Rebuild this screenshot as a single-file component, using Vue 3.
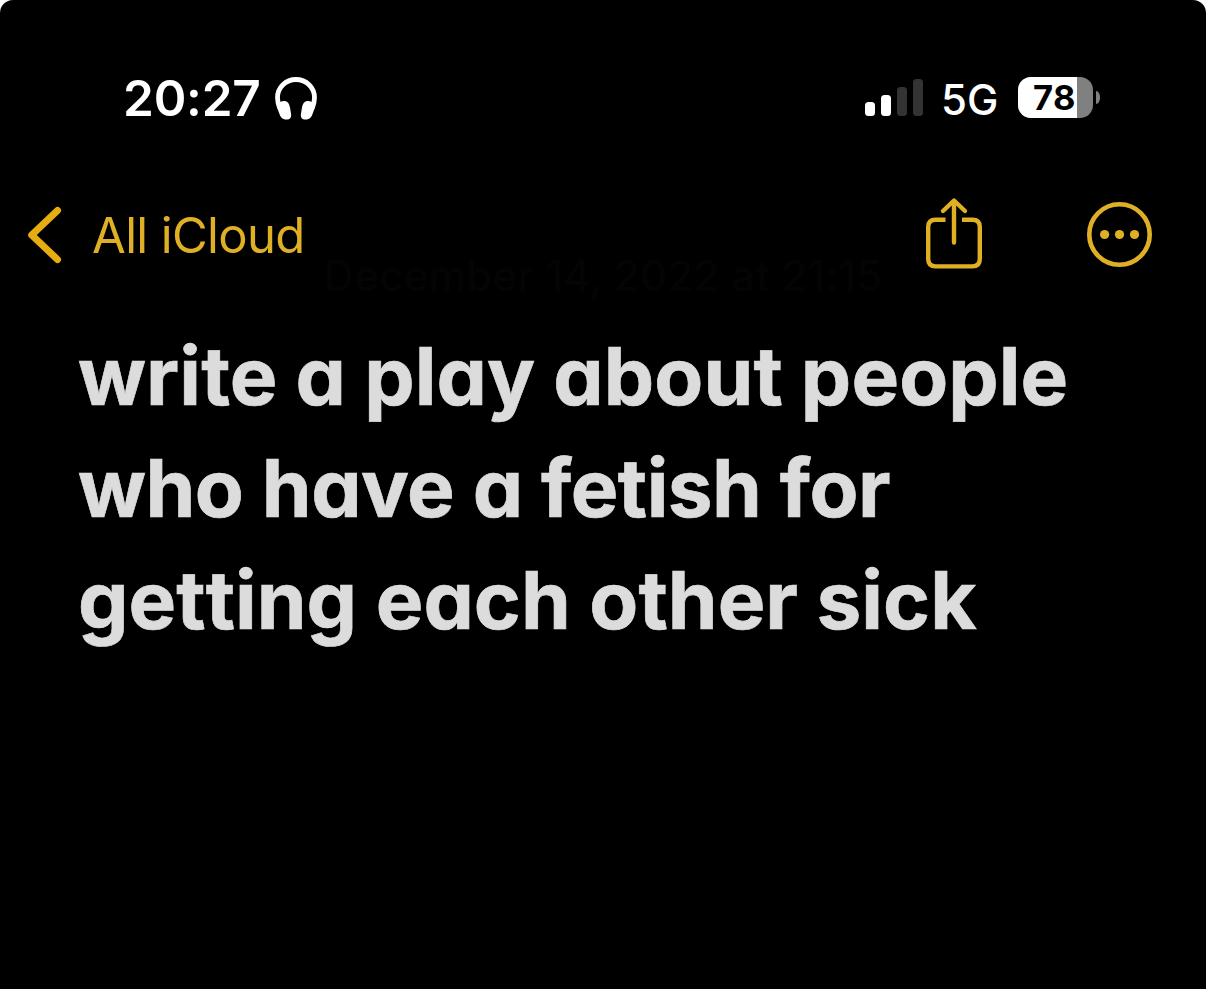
<template>
  <main class="screen">
    <header class="statusBar">
      <span class="time">{{ time }}</span>
      <svg class="headphones" width="42" height="44" viewBox="0 0 42 44">
        <path d="M5 31C3.200 27.500 2.500 24.500 2.500 20.800C2.500 10.500 10.800 2.500 21 2.500S39.500 10.500 39.500 20.800C39.500 24.500 38.800 27.500 37 31" fill="none" stroke="#fff" stroke-width="4.800" />
        <path d="M3 27C4.500 25 6.500 24 9 24C12.500 24 14.300 26.500 15.100 31L16 36.500C16.700 40.500 15 42.500 11.500 42.500C8 42.500 5.800 41 4.500 37L1.500 29Z" fill="#fff" />
        <path d="M39 27C37.500 25 35.500 24 33 24C29.500 24 27.700 26.500 26.900 31L26 36.500C25.300 40.500 27 42.500 30.500 42.500C34 42.500 36.200 41 37.500 37L40.500 29Z" fill="#fff" />
      </svg>
      <div class="signal">
        <i v-for="(h, i) in bars" :key="i" :class="['bar', i < strength ? 'on' : '']" :style="{ height: h + 'px' }"></i>
      </div>
      <span class="network">5G</span>
      <div class="battery">
        <div class="level" :style="{ width: battery + '%' }"></div>
        <span class="percent">{{ battery }}</span>
      </div>
      <i class="nub"></i>
    </header>

    <nav class="navBar">
      <button class="back">
        <svg width="35" height="58" viewBox="0 0 35 58">
          <path d="M30.500 4.500L4.700 29L30.500 53.500" fill="none" stroke="#e6ad10" stroke-width="7" stroke-linecap="round" stroke-linejoin="round" />
        </svg>
        <span class="backText">All iCloud</span>
      </button>
      <button class="share">
        <svg width="58" height="72" viewBox="0 0 58 72" fill="none" stroke="#e0b024" stroke-width="4.400">
          <path d="M20.500 22.800H10.500Q3.200 22.800 3.200 30.100V62.100Q3.200 69.400 10.500 69.400H47.500Q54.800 69.400 54.800 62.100V30.100Q54.800 22.800 47.500 22.800H37" />
          <path d="M29 45.500V4.500M18 14L29 3.500L40 14" stroke-linecap="round" stroke-linejoin="round" />
        </svg>
      </button>
      <button class="more">
        <svg width="66" height="66" viewBox="0 0 66 66" fill="#e0b024">
          <circle cx="33.500" cy="33.500" r="30.200" fill="none" stroke="#e0b024" stroke-width="4.600" />
          <circle cx="18.600" cy="33.500" r="4.600" />
          <circle cx="33.500" cy="33.500" r="4.600" />
          <circle cx="48.500" cy="33.500" r="4.600" />
        </svg>
      </button>
    </nav>

    <p class="date">December 14, 2022 at 21:15</p>
    <h1 class="note">
      <span v-for="line in lines" :key="line" class="line">{{ line }}</span>
    </h1>
  </main>
</template>

<script setup>
import { ref } from "vue";

const time = ref("20:27");
const battery = ref(78);
// signal bars: heights and how many are lit
const bars = [14, 21, 29, 37];
const strength = ref(2);

const lines = [
  "write a play about people",
  "who have a fetish for",
  "getting each other sick",
];
</script>

<style>
body {
  background: #fff;
}
</style>

<style scoped>
.screen {
  width: 1206px;
  height: 989px;
  box-sizing: border-box;
  overflow: hidden;
  padding-top: 77px;
  border-radius: 13px 13px 0 0;
  background: #000;
  color: #fff;
  font-family: Inter, "Liberation Sans", sans-serif;
}
/* status bar */
.statusBar {
  display: flex;
  height: 44px;
  padding-left: 123px;
}
.time {
  width: 152px;
  font-size: 49.5px;
  font-weight: 600;
  line-height: 43px;
  letter-spacing: -0.2px;
  white-space: nowrap;
}
.headphones {
  margin-right: 548px;
  flex-shrink: 0;
}
.signal {
  display: flex;
  align-items: flex-end;
  gap: 6px;
  width: 58px;
  height: 39px;
}
.bar {
  width: 10px;
  border-radius: 3.5px;
  background: #333;
}
.bar.on {
  background: #fff;
}
.network {
  width: 77px;
  margin-left: 18px;
  font-size: 42px;
  font-weight: 500;
  line-height: 46px;
}
.battery {
  display: flex;
  position: relative;
  width: 75px;
  height: 41px;
  border-radius: 13px;
  overflow: hidden;
  background: #808080;
}
.level {
  background: #fff;
}
.percent {
  position: absolute;
  left: 15px;
  top: 0;
  color: #000;
  font-size: 34.5px;
  font-weight: 700;
  line-height: 42px;
  letter-spacing: 0.5px;
}
.nub {
  width: 4px;
  height: 13px;
  margin: 14px 0 0 3px;
  border-radius: 0 4px 4px 0 / 0 6px 6px 0;
  background: #808080;
}
/* navigation */
.navBar {
  display: flex;
  height: 72px;
  margin-top: 76px;
  padding-left: 27px;
}
button {
  display: flex;
  padding: 0;
  border: none;
  background: none;
  color: #e0b024;
  font-family: inherit;
  cursor: pointer;
}
.back {
  width: 898px;
  padding-top: 9px;
}
.backText {
  margin-left: 30px;
  font-size: 49px;
  font-weight: 400;
  line-height: 60px;
  letter-spacing: -0.65px;
}
.share {
  width: 161px;
}
.more {
  padding-top: 4px;
}
/* note */
.date {
  height: 50px;
  margin: -18px 0 0;
  text-align: center;
  color: #040404;
  font-size: 42px;
  font-weight: 500;
  line-height: 50px;
  letter-spacing: 0.3px;
}
.note {
  margin: 19px 0 0 78px;
  color: #dcdcdc;
  font-size: 80px;
  font-weight: 700;
  line-height: 112px;
  font-feature-settings: "cv11";
  -webkit-text-stroke: 0.7px #dcdcdc;
}
.line {
  display: block;
  white-space: nowrap;
  letter-spacing: 0.1px;
  word-spacing: -1px;
}
.line:nth-child(2) {
  letter-spacing: -0.5px;
  word-spacing: 0;
}
.line:nth-child(3) {
  letter-spacing: 0.05px;
  word-spacing: -0.5px;
  font-kerning: none;
}
</style>
